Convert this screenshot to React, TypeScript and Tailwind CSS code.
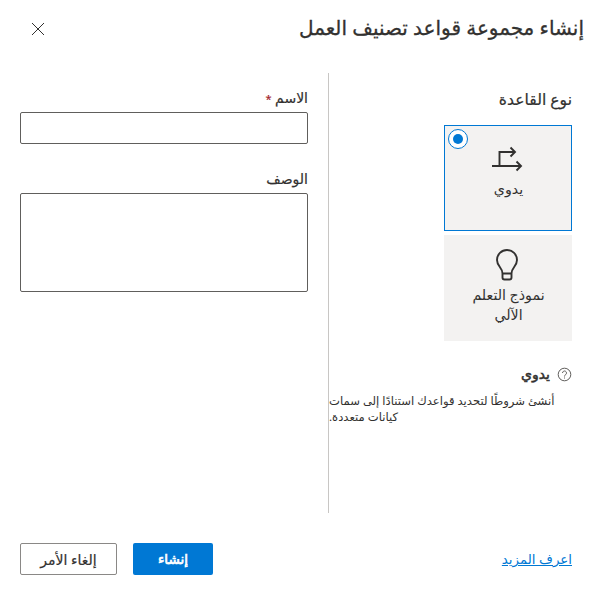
import type { ReactNode } from "react";

function TypeCard({ label, selected, icon }: { label: string; selected?: boolean; icon: ReactNode }) {
  return (
    <div className={"relative flex h-[106px] w-32 flex-col items-center border bg-[#f3f2f1] px-5 pt-3 " + (selected ? "border-[#0078d4]" : "border-[#f3f2f1]")}>
      {selected && (
        <span className="absolute left-[3px] top-[3px] flex h-5 w-5 items-center justify-center rounded-full border border-[#0078d4] bg-white">
          <span className="h-2.5 w-2.5 rounded-full bg-[#0078d4]" />
        </span>
      )}
      <div className={selected ? "h-[41px]" : "h-[37px]"}>{icon}</div>
      <span className="pl-px text-center text-[14.2px] leading-5 text-[#323130]">{label}</span>
    </div>
  );
}

export default function App() {
  return (
    <div dir="rtl" className="flex h-[591px] w-[593px] flex-col overflow-hidden bg-white font-['Noto_Sans','DejaVu_Sans',sans-serif] text-[#323130]">
      <header className="flex h-[73px] shrink-0 items-start justify-between pl-[31px] pr-[9px] pt-[14px]">
        <h1 className="whitespace-nowrap text-[20px] leading-[28px] [-webkit-text-stroke:0.3px]">إنشاء مجموعة قواعد تصنيف العمل</h1>
        <svg className="mt-2" width="14" height="14" viewBox="0 0 14 14" fill="none" stroke="#323130">
          <path d="M1 1l12 12M13 1L1 13" />
        </svg>
      </header>
      <main className="flex h-[440px] shrink-0">
        <section className="w-[265px] shrink-0 border-l border-[#c8c6c4] pr-[21px] pt-[15px]">
          <h2 className="text-[15.6px] leading-[22px] [-webkit-text-stroke:0.2px]">نوع القاعدة</h2>
          <div className="mt-[15px] flex flex-col gap-1">
            <TypeCard
              selected
              label="يدوي"
              icon={
                <svg width="32" height="32" viewBox="0 0 32 32" fill="none" stroke="#323130" strokeWidth="1.9" className="mt-1">
                  <path d="M0 24h29M7.500 24V10h15.500M18.500 5.500L23 10l-4.500 4.500M24.500 19.500L29 24l-4.500 4.500" />
                </svg>
              }
            />
            <TypeCard
              label="نموذج التعلم الآلي"
              icon={
                <svg width="32" height="34" viewBox="0 0 32 34" fill="none" stroke="#323130" strokeWidth="1.9">
                  <path d="M10.500 25.500c0-6-5.500-7-5.500-13.500a10 10 0 0 1 20 0c0 6.500-5.500 7.500-5.500 13.500zM10.500 25.500v4a2 2 0 0 0 2 2h5a2 2 0 0 0 2-2v-4" />
                </svg>
              }
            />
          </div>
          <div className="mt-[23px] flex items-center gap-[7px]">
            <svg width="15" height="15" viewBox="0 0 15 15" fill="none" stroke="#605e5c">
              <circle cx="7.500" cy="7.500" r="6.300" />
              <path d="M5.500 6a2 2 0 1 1 3.200 1.600c-.8.600-1.200.9-1.200 1.900M7.500 10.500v1" />
            </svg>
            <h3 className="text-[14px] leading-5 [-webkit-text-stroke:0.5px]">يدوي</h3>
          </div>
          <p className="mt-[9px] whitespace-nowrap text-left text-[11.6px] leading-4">
            أنشئ شروطًا لتحديد قواعدك استنادًا إلى سمات
            <br />
            كيانات متعددة.
          </p>
        </section>
        <section className="flex flex-1 flex-col pl-5 pr-5 pt-[15px]">
          <label className="h-5 text-[14px] leading-5 [-webkit-text-stroke:0.2px]">
            الاسم <span className="text-[11px] text-[#a4262c]">*</span>
          </label>
          <input className="mt-1 h-8 shrink-0 rounded-[2px] border border-[#605e5c] px-2 outline-none" />
          <label className="mt-[25px] h-5 text-[14px] leading-5 [-webkit-text-stroke:0.2px]">الوصف</label>
          <textarea className="mt-1 h-[99px] resize-none rounded-[2px] border border-[#605e5c] outline-none" />
        </section>
      </main>
      <footer className="mt-[30px] flex h-8 items-center pl-5 pr-[21px]">
        <a className="ml-auto text-[13.4px] leading-5 text-[#0078d4] underline">اعرف المزيد</a>
        <button className="h-8 w-20 rounded-[2px] bg-[#0078d4] text-[13.5px] text-white [-webkit-text-stroke:0.7px]">إنشاء</button>
        <button className="mr-4 h-8 w-[97px] rounded-[2px] border border-[#8a8886] text-[14px] [-webkit-text-stroke:0.2px]">إلغاء الأمر</button>
      </footer>
    </div>
  );
}
